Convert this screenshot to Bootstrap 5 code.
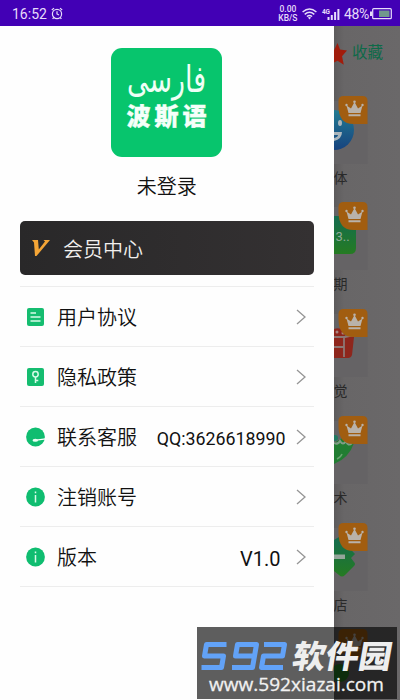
<!DOCTYPE html>
<html lang="zh-CN">
<head>
<meta charset="utf-8">
<meta name="viewport" content="width=device-width, initial-scale=1">
<title>波斯语</title>
<link href="https://cdn.jsdelivr.net/npm/bootstrap@5.3.0/dist/css/bootstrap.min.css" rel="stylesheet">
<style>
body{width:400px;height:700px;overflow:hidden;font-family:Roboto,"Noto Sans CJK SC",sans-serif;color:#111;background:#fff}
svg{display:block;flex:none;overflow:visible}
.statusbar{height:26px;background:#4200b5;color:#e6dcfa;font-size:14px;line-height:1;padding:2px 8px 0 12px}
.rate{font-size:8.5px;line-height:9px;font-weight:500;width:20px;white-space:nowrap}
.drawer{width:333.5px;height:674px;background:#fefefe;padding:22px 20px 0}
.user{font-size:20px;line-height:28px;margin-top:16px;font-weight:350}
.vip{height:54px;margin-top:20px;border-radius:5px;background:linear-gradient(90deg,#292829,#343132);color:#f2f0ee;font-size:20px;font-weight:350;padding-left:11px}
.vip span{padding-top:3px}
.menu{margin-top:11px;border-top:1px solid #ededed;font-weight:350}
.menu .item{height:60.1px;border-bottom:1px solid #ededed;font-size:20px;line-height:1;padding:1px 6px 0 5px}
.item .cap{margin-left:11px;padding-top:2px}
.item .val{padding-top:3px;font-weight:400}
.page{width:66.5px;height:674px;background:linear-gradient(90deg,#5d5b5c,#686667 10px,#6a6869);overflow:hidden}
.fav{height:56px;color:#0d6a48;font-size:15.5px;line-height:1}
.cell{height:106.8px}
.cell .txt{font-size:14px;line-height:16px;color:#292929;margin-top:2px}
.wm{left:197px;top:627px}
</style>
</head>
<body class="d-flex flex-column position-relative">
<svg width="0" height="0" class="position-absolute"><defs>
<g id="crown"><path d="M5 0h19q5 0 5 5v23H15Q0 28 0 10V5Q0 0 5 0Z" fill="#a15d10"/><path d="M10 17 8 9.500l4.500 3L16 6l3.500 6.500 4.500-3L22 17ZM10 18.300h12v2H10Z" fill="#b9b2aa"/><g fill="#b9b2aa"><circle cx="8" cy="9" r="1.200"/><circle cx="16" cy="5.800" r="1.300"/><circle cx="24" cy="9" r="1.200"/></g></g>
<linearGradient id="blue" x2="0" y2="1"><stop stop-color="#227b92"/><stop offset="1" stop-color="#16437f"/></linearGradient>
<linearGradient id="green" x2="0" y2="1"><stop stop-color="#146c50"/><stop offset="1" stop-color="#257b22"/></linearGradient>
<path id="chev" d="m1 1 8 7-8 7" fill="none" stroke="#959595" stroke-width="1.300"/>
</defs></svg>

<header class="statusbar d-flex align-items-center">
  <span>16:52</span>
  <svg class="ms-1" style="margin-top:-2px" width="12" height="13" viewBox="0 0 12 13" fill="none" stroke="#e6dcfa" stroke-width="1.200"><circle cx="6" cy="7" r="4.600"/><path d="M6 4.300V7l2 1M.8 3 3 1.100M11.200 3 9 1.100M2.800 10.500l-1.200 1.400M9.200 10.500l1.200 1.400"/></svg>
  <div class="rate text-center ms-auto"><div>0.00</div><div>KB/S</div></div>
  <svg style="margin-left:4px" width="15" height="12" viewBox="0 0 15 12" fill="none" stroke="#e6dcfa" stroke-width="1.500"><path d="M.6 4Q7.500-2 14.400 4M2.700 6.300q4.800-4 9.600 0M4.900 8.500q2.600-2 5.200 0"/><path d="m5.900 9.500 1.600 2 1.600-2Q7.500 8.700 5.900 9.500Z" fill="#e6dcfa" stroke="none"/></svg>
  <svg style="margin-left:5px" width="18" height="13" viewBox="0 0 18 13" fill="#e6dcfa"><text x="0" y="6" font-size="6.500" font-weight="700" textLength="8">4G</text><path d="M5.500 9h2v3h-2zM8.800 7h2v5h-2zM12.100 4h2v8h-2zM15.400 1h2v11h-2z"/></svg>
  <span style="margin-left:4px;letter-spacing:-.3px">48%</span>
  <svg style="margin-left:1px" width="22" height="12" viewBox="0 0 22 12"><rect x="2.700" y=".7" width="18.600" height="10" rx="1" fill="none" stroke="#e6dcfa" stroke-width="1.200"/><path d="M0 3.500h2v4.500H0z" fill="#e6dcfa"/><path d="M9 2.500h10.500v6.500H9z" fill="#71988c"/></svg>
</header>

<div class="d-flex">
<main class="drawer flex-shrink-0">
  <svg class="mx-auto" width="111" height="109" viewBox="0 0 111 109"><rect width="111" height="109" rx="11" fill="#07c56d"/>
    <text x="55.500" y="43.500" text-anchor="middle" direction="rtl" font-family="DejaVu Sans" font-size="37" textLength="79" lengthAdjust="spacingAndGlyphs" fill="#effff6">فارسی</text>
    <text x="15.500" y="76.500" font-family="Noto Sans CJK SC" font-weight="900" font-size="24" textLength="80" fill="#f5fff9" stroke="#f5fff9" stroke-width=".4">波斯语</text></svg>
  <div class="user text-center">未登录</div>
  <a class="vip d-flex align-items-center text-decoration-none"><svg width="20" height="18" viewBox="0 0 20 18"><path d="M1 1h6l.8 9.500L14 2.500 12.500 1H19L5.500 17H4L3 3.500Z" fill="#f4a536"/></svg><span style="margin-left:12px">会员中心</span></a>
  <div class="menu">
    <div class="item d-flex align-items-center"><svg width="21" height="20" viewBox="0 0 21 20"><rect x="2" y="1" width="17" height="18" rx="2" fill="#15bd70"/><path d="M5.500 6H11M5.500 10h10M5.500 14h10" stroke="#d8fbe8" stroke-width="1.500"/></svg><span class="cap">用户协议</span><svg class="ms-auto" width="12" height="16"><use href="#chev"/></svg></div>
    <div class="item d-flex align-items-center"><svg width="21" height="20" viewBox="0 0 21 20"><rect x="2" y="1" width="17" height="18" rx="2" fill="#15bd70"/><g fill="none" stroke="#d8fbe8" stroke-width="1.500"><circle cx="10.500" cy="7.300" r="2.700"/><path d="M10.500 10v6M10.500 13.500h2.800"/></g></svg><span class="cap">隐私政策</span><svg class="ms-auto" width="12" height="16"><use href="#chev"/></svg></div>
    <div class="item d-flex align-items-center"><svg width="21" height="20" viewBox="0 0 21 20"><circle cx="10.500" cy="10" r="9.400" fill="#0fbd70"/><path d="M20.500 11.800 11.500 13.200" stroke="#fff" stroke-width="1.300"/><ellipse cx="10.300" cy="13.300" rx="2.800" ry="1.500" fill="#eafff4"/></svg><span class="cap">联系客服</span><span class="val ms-auto" style="font-size:17.8px;margin-right:10px">QQ:3626618990</span><svg width="12" height="16"><use href="#chev"/></svg></div>
    <div class="item d-flex align-items-center"><svg width="21" height="20" viewBox="0 0 21 20"><circle cx="10.500" cy="10" r="9.400" fill="#0fbd70"/><path d="M10.500 8v7.500M10.500 4.500v1.800" stroke="#d8fbe8" stroke-width="1.500"/></svg><span class="cap">注销账号</span><svg class="ms-auto" width="12" height="16"><use href="#chev"/></svg></div>
    <div class="item d-flex align-items-center"><svg width="21" height="20" viewBox="0 0 21 20"><circle cx="10.500" cy="10" r="9.400" fill="#0fbd70"/><path d="M10.500 8v7.500M10.500 4.500v1.800" stroke="#d8fbe8" stroke-width="1.500"/></svg><span class="cap">版本</span><span class="val ms-auto" style="margin-right:15px">V1.0</span><svg width="12" height="16"><use href="#chev"/></svg></div>
  </div>
</main>
<aside class="page">
  <div class="fav d-flex align-items-center"><svg width="14" height="22" viewBox="0 1 14 18.500" preserveAspectRatio="none"><path d="M3.500 1 6 6.500l7 .8-5 4.900 1.800 7L3.500 16 0 17.500V7Z" fill="#a11c0b"/></svg><span style="margin-left:4.500px">收藏</span></div>
  <div style="height:13.500px"></div>
  <div class="cell"><svg width="34" height="72" viewBox="0 0 34 72"><path d="M0 5h33.500v63H0z" fill="#656365"/><circle cx="0" cy="34" r="20" fill="url(#blue)"/><ellipse cx="6" cy="27" rx="2" ry="3" fill="#aab5bb"/><path d="M0 36h8q0 7-8 9v-3q4-1 4-3H0Z" fill="#aab5bb"/><use href="#crown" x="4.500"/></svg><div class="txt">体</div></div>
  <div class="cell"><svg width="34" height="72" viewBox="0 0 34 72"><path d="M0 5h33.500v63H0z" fill="#656365"/><path d="M0 14h22v32q0 6-6 6H0Z" fill="url(#green)"/><text x="1.500" y="39" font-size="13" fill="#91aa97">3..</text><use href="#crown" x="4.500"/></svg><div class="txt">期</div></div>
  <div class="cell"><svg width="34" height="72" viewBox="0 0 34 72"><path d="M0 5h33.500v63H0z" fill="#656365"/><path d="M0 20q9-3 11 7l9 1-2 18q-1 3-4 3H0Z" fill="#8e261c"/><path d="M0 28h11l9-2M0 38h10M10 29v19" fill="none" stroke="#8d7774" stroke-width="1.800"/><circle cx="3" cy="23" r="1.500" fill="#a98580"/><circle cx="9" cy="24" r="1.500" fill="#a98580"/><use href="#crown" x="4.500"/></svg><div class="txt">觉</div></div>
  <div class="cell"><svg width="34" height="72" viewBox="0 0 34 72"><path d="M0 5h33.500v63H0z" fill="#656365"/><path d="M0 27 10 21l10 6Q15 42 0 48Z" fill="#217d32"/><path d="M0 27q4 2 6-2 3 5 6 0 2 6 6 2" fill="none" stroke="#809c86" stroke-width="2"/><path d="M3 43q4-2 5-5" stroke="#68a270" stroke-width="1.500" fill="none"/><circle cx="1" cy="22" r="3" fill="#207961"/><use href="#crown" x="4.500"/></svg><div class="txt">术</div></div>
  <div class="cell"><svg width="34" height="72" viewBox="0 0 34 72"><path d="M0 5h33.500v63H0z" fill="#656365"/><path d="M0 17 5 14l16 17-4 4 3 4q2 2 0 4l-9 9q-3 3-6 0l-5-4Z" fill="url(#green)"/><path d="M0 31.500h11v4.500H0z" fill="#94a69b"/><use href="#crown" x="4.500"/></svg><div class="txt">店</div></div>
  <div class="cell"><svg width="34" height="72" viewBox="0 0 34 72"><circle cx="6" cy="44" r="9" fill="#257b22"/><use href="#crown" x="4.500"/></svg></div>
</aside>
</div>

<svg class="wm position-absolute" width="200" height="72" viewBox="0 0 200 72"><path d="M0 0h200v72H0z" fill="#000" fill-opacity=".63"/>
  <path d="M29.500 17.500H9.500L7.500 29H26.500L24.500 40.500H4.500M57 29H38.500L40.500 17.500H59.500L55.500 40.500H35M67 17.500H87.500L85.500 29H66.500L64.500 40.500H86" fill="none" stroke="#62a2f7" stroke-width="5" stroke-linejoin="round"/>
  <text transform="translate(94 40.500) skewX(-10)" font-family="Noto Sans CJK SC" font-weight="900" font-size="32" textLength="99" lengthAdjust="spacingAndGlyphs" fill="#eee">软件园</text>
  <text x="12" y="63.500" font-family="Open Sans, sans-serif" font-size="19" font-weight="500" textLength="175" lengthAdjust="spacingAndGlyphs" fill="#f1f1f1" stroke="#f1f1f1" stroke-width=".3">www.592xiazai.com</text></svg>
</body>
</html>
